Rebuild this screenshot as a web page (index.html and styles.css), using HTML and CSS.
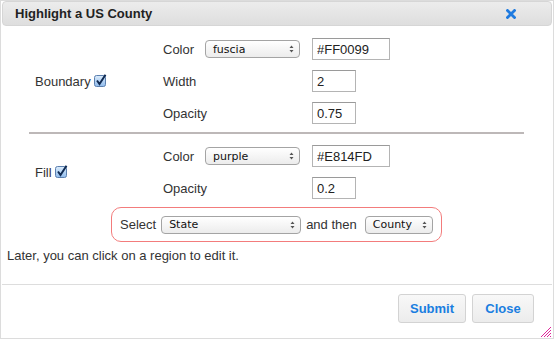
FILE: index.html
```html
<!DOCTYPE html>
<html>
<head>
<meta charset="utf-8">
<link rel="stylesheet" href="styles.css">
</head>
<body>
<div class="dialog">
  <div class="titlebar">
    <span class="title">Highlight a US County</span>
    <svg class="close" width="10" height="10" viewBox="0 0 10 10"><path d="M1.5 1.5 L8.5 8.5 M8.5 1.5 L1.5 8.5" stroke="#1f7be0" stroke-width="2.8" stroke-linecap="square"/></svg>
  </div>
  <div class="content">
    <div class="section three">
      <div class="main-label">Boundary <svg class="check" width="13" height="13" viewBox="0 0 13 13"><defs><linearGradient id="cb1" x1="0" y1="0" x2="0" y2="1"><stop offset="0" stop-color="#dcecfb"/><stop offset="1" stop-color="#8fbbec"/></linearGradient></defs><rect x="0.5" y="1.5" width="11" height="11" rx="2" fill="url(#cb1)" stroke="#5b7fae"/><path d="M3 6.5 L5.5 10 L11.5 0.8" stroke="#0f2a52" stroke-width="2" fill="none"/></svg></div>
      <div class="sub">Color</div>
      <div class="cell"><div class="select w95"><span>fuscia</span><svg class="arr" width="5" height="8" viewBox="0 0 5 8"><path d="M0.5 3 L2.5 0.5 L4.5 3Z M0.5 5 L2.5 7.5 L4.5 5Z" fill="#555"/></svg></div></div>
      <div class="cell"><input class="txt wide" value="#FF0099"></div>
      <div class="sub r2">Width</div>
      <div class="cell c4 r2"><input class="txt narrow" value="2"></div>
      <div class="sub r3">Opacity</div>
      <div class="cell c4 r3"><input class="txt narrow" value="0.75"></div>
    </div>
    <div class="rule"></div>
    <div class="section two">
      <div class="main-label">Fill <svg class="check" width="13" height="13" viewBox="0 0 13 13"><defs><linearGradient id="cb2" x1="0" y1="0" x2="0" y2="1"><stop offset="0" stop-color="#dcecfb"/><stop offset="1" stop-color="#8fbbec"/></linearGradient></defs><rect x="0.5" y="1.5" width="11" height="11" rx="2" fill="url(#cb2)" stroke="#5b7fae"/><path d="M3 6.5 L5.5 10 L11.5 0.8" stroke="#0f2a52" stroke-width="2" fill="none"/></svg></div>
      <div class="sub">Color</div>
      <div class="cell"><div class="select w95"><span>purple</span><svg class="arr" width="5" height="8" viewBox="0 0 5 8"><path d="M0.5 3 L2.5 0.5 L4.5 3Z M0.5 5 L2.5 7.5 L4.5 5Z" fill="#555"/></svg></div></div>
      <div class="cell"><input class="txt wide" value="#E814FD"></div>
      <div class="sub r2">Opacity</div>
      <div class="cell c4 r2"><input class="txt narrow" value="0.2"></div>
    </div>
    <div class="picker">
      <span class="plabel">Select</span>
      <div class="select w140"><span>State</span><svg class="arr" width="5" height="8" viewBox="0 0 5 8"><path d="M0.5 3 L2.5 0.5 L4.5 3Z M0.5 5 L2.5 7.5 L4.5 5Z" fill="#555"/></svg></div>
      <span class="plabel">and then</span>
      <div class="select w68"><span>County</span><svg class="arr" width="5" height="8" viewBox="0 0 5 8"><path d="M0.5 3 L2.5 0.5 L4.5 3Z M0.5 5 L2.5 7.5 L4.5 5Z" fill="#555"/></svg></div>
    </div>
    <p class="note">Later, you can click on a region to edit it.</p>
  </div>
  <div class="footer">
    <button class="btn submit">Submit</button>
    <button class="btn closebtn">Close</button>
  </div>
  <svg class="grip" width="13" height="13" viewBox="0 0 13 13"><path d="M12 2 L2 12 M12 5 L5 12 M12 8 L8 12 M12 11 L11 12" stroke="#e0249a" stroke-width="1"/></svg>
</div>
</body>
</html>
```

FILE: styles.css
```css
* { box-sizing: border-box; }
html, body { margin: 0; padding: 0; background: #fff; }
body { font-family: "Liberation Sans", Arial, sans-serif; font-size: 13px; color: #333; }

.dialog {
  position: relative;
  width: 554px;
  height: 339px;
  border: 1px solid #dcdcdc;
  padding: 0 1px;
  display: flex;
  flex-direction: column;
  background: #fff;
}

.titlebar {
  height: 25px;
  flex: none;
  border: 1px solid #d6d6d6;
  border-radius: 4px;
  background: linear-gradient(#ececec, #dedede);
  display: flex;
  align-items: center;
  justify-content: space-between;
  padding: 0 35px 0 12px;
}
.title { font-weight: bold; color: #222; font-size: 13px; }
.close { display: block; }

.content {
  height: 258px;
  flex: none;
  padding-top: 7px;
}

.section {
  display: grid;
  grid-template-columns: 161px 42px 107px 1fr;
  grid-auto-rows: 32px;
  align-items: center;
}
.main-label {
  grid-column: 1;
  grid-row: 1 / -1;
  padding-left: 33px;
  display: flex;
  align-items: center;
  gap: 3px;
}
.section.three .main-label { grid-row: 1 / 4; }
.section.two .main-label { grid-row: 1 / 3; }
.check { display: block; margin-top: -2px; }
.sub { grid-column: 2; }
.r2 { grid-row: 2; }
.r3 { grid-row: 3; }
.c4 { grid-column: 4; }
.cell { display: flex; align-items: center; }

.txt {
  height: 22px;
  border: 1px solid #b4b4b4;
  border-top-color: #9a9a9a;
  font-family: "Liberation Sans", Arial, sans-serif;
  font-size: 13px;
  color: #222;
  padding: 0 4px;
  margin: 0;
  background: #fff;
}
.wide { width: 78px; }
.narrow { width: 44px; }

.select {
  height: 18px;
  border: 1px solid #a4a4a4;
  border-radius: 4px;
  background: linear-gradient(#ffffff, #ececec);
  font-family: "DejaVu Sans", sans-serif;
  font-size: 11px;
  color: #111;
  display: flex;
  align-items: center;
  justify-content: space-between;
  padding: 0 5px 0 7px;
}
.arr { display: block; }
.w95 { width: 95px; }
.w140 { width: 140px; }
.w68 { width: 68px; }

.rule {
  height: 2px;
  background: #bdb8b8;
  margin: 3px 0 6px 27px;
  width: 495px;
}

.picker {
  margin: 3px 0 0 109px;
  width: 331px;
  height: 35px;
  border: 1.5px solid #f37c7c;
  border-radius: 10px;
  display: flex;
  align-items: center;
  padding-left: 8px;
  gap: 5px;
}
.picker .plabel { color: #333; }
.picker .w68 { margin-left: 3px; }

.note { margin: 6px 0 0 5px; color: #333; line-height: 15px; }

.footer {
  flex: none;
  height: 54px;
  border-top: 1px solid #dddddd;
  display: flex;
  justify-content: flex-end;
  align-items: flex-start;
  padding: 9px 18px 0 0;
  gap: 6px;
}
.btn {
  height: 29px;
  border: 1px solid #d3d3d3;
  border-radius: 3px;
  background: linear-gradient(#f8f8f8, #ececec);
  color: #1a7ee0;
  font-family: "Liberation Sans", Arial, sans-serif;
  font-weight: bold;
  font-size: 13px;
  padding: 0;
  margin: 0;
}
.submit { width: 68px; }
.closebtn { width: 62px; }

.grip { position: absolute; right: 1px; bottom: 0; }
```
